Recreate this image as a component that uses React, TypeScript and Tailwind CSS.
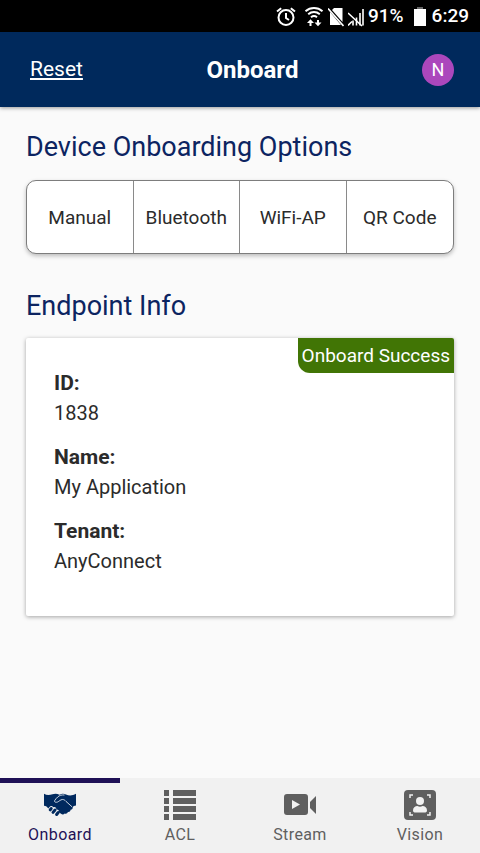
import type { ReactNode } from "react";

const onboardingOptions = ["Manual", "Bluetooth", "WiFi-AP", "QR Code"];

const endpointInfo = [
  { label: "ID:", value: "1838" },
  { label: "Name:", value: "My Application" },
  { label: "Tenant:", value: "AnyConnect" },
];

function StatusBar() {
  return (
    <div className="flex h-8 shrink-0 items-center justify-end bg-black pt-px pr-[11px] text-[19px] font-medium text-white">
      <svg className="mr-2 h-5 w-5" viewBox="0 0 20 20" fill="none" stroke="currentColor" strokeWidth="2" aria-hidden="true">
        <circle cx="10" cy="10.500" r="7.500" />
        <path d="M10 6v5l3 2M1 4.500 5.200 1.200M19 4.500l-4.200-3.300" />
      </svg>
      <svg className="mr-1 h-5 w-5" viewBox="0 0 20 20" fill="none" stroke="currentColor" strokeWidth="2" aria-hidden="true">
        <path d="M1.500 4.200c5-4.200 12-4.200 17 0M4.200 7.200c3.500-2.800 8.100-2.800 11.600 0M7 10.200c1.800-1.400 4.200-1.400 6 0" />
        <path d="M6.500 19v-4M14 13v4" />
        <path d="M3 16 6.500 12.300 10 16zM10.500 15.500l3.500 3.700 3.500-3.700z" fill="currentColor" stroke="none" />
      </svg>
      <svg className="h-5 w-4" viewBox="0 0 16 20" aria-hidden="true">
        <path d="M6 1h8.500v14L4 3z" fill="currentColor" />
        <path d="M2 5v13h11z" fill="currentColor" />
        <path d="M0 1.500 15.500 19" stroke="currentColor" strokeWidth="1.600" />
      </svg>
      <svg className="mx-1 h-5 w-4" viewBox="0 0 16 20" fill="none" stroke="currentColor" aria-hidden="true">
        <path d="M5 18.500v-5M8.500 18.500v-8M12 18.500V6M15 18.500V2" strokeWidth="1.600" />
        <path d="M0 6l14 13M0 18.500l4-4" strokeWidth="1.600" />
      </svg>
      <span>91%</span>
      <svg className="mr-[6px] ml-[10px] h-5 w-3" viewBox="0 0 12 20" aria-hidden="true">
        <path d="M3 0h6v2H3z" fill="#666" />
        <path d="M0 2h12v17H0z" fill="currentColor" />
      </svg>
      <span>6:29</span>
    </div>
  );
}

function HandshakeIcon() {
  return (
    <svg className="h-8 w-8" viewBox="0 0 32 32" aria-hidden="true">
      <path
        d="M0 4.800c2.500 1.500 5 1.700 8.500.5 2.200-.8 4.500-.8 7 .4 2.300-1.300 4.500-1.200 6.500-.2 3.500 1.700 6.500 1.200 10-.7V16.500c-1.700.1-2.700.6-3.300 1.600.3 1.600-.6 2.700-2.100 2.700-.2 1.600-1.200 2.400-2.700 2.200-.6 1.500-1.800 2-3.200 1.400-.9 1.200-2.400 1.300-3.700.3l-2-1.500c.2-1.900-.8-3-2.600-2.800-.2-1.900-1.500-2.700-3.200-2.100-.9-1.500-2.600-1.600-3.700-.2L4.300 19.500C3.300 17.800 2 16.900 0 16.700z"
        fill="#00295e"
      />
      <path
        d="M20.500 6c-2.600-.3-5.100.3-6.800 2-1.300 1.200-2.300 2.300-3.100 3.700-.5 1.500 1.300 1.900 3 1.300 1.700-.8 2.800-2.300 4.700-2.500 1.500-.1 2.700.7 3.700 1.900l6 5.400"
        fill="none"
        stroke="#dfe4ec"
        strokeWidth="0.900"
      />
      <path d="M6.200 20.800l1-1.300M9 23.400l2-2.400M12.600 25.500l1.600-2" stroke="#00295e" strokeWidth="3" strokeLinecap="round" />
    </svg>
  );
}

function ListIcon() {
  return (
    <svg className="h-8 w-8" viewBox="0 0 32 32" fill="currentColor" aria-hidden="true">
      <path d="M0 1h5v6H0zM9 1h23v6H9zM0 9h5v6H0zM9 9h23v6H9zM0 17h5v6H0zM9 17h23v6H9zM0 25h5v6H0zM9 25h23v6H9z" />
    </svg>
  );
}

function VideoIcon() {
  return (
    <svg className="h-8 w-8" viewBox="0 0 32 32" fill="currentColor" aria-hidden="true">
      <path
        fillRule="evenodd"
        d="M3 5h18a3 3 0 0 1 3 3v15a3 3 0 0 1-3 3H3a3 3 0 0 1-3-3V8a3 3 0 0 1 3-3zm5 6v9l8-4.500z"
      />
      <path d="M32 7v18l-6-6v-6z" />
    </svg>
  );
}

function VisionIcon() {
  return (
    <svg className="h-8 w-8" viewBox="0 0 32 32" aria-hidden="true">
      <rect y="1" width="32" height="30" rx="4" fill="currentColor" />
      <path d="M6 9V6h3M23 6h3v3M26 23v3h-3M9 26H6v-3" fill="none" stroke="#f1f1f1" strokeWidth="1.500" />
      <circle cx="16" cy="12" r="4" fill="#f1f1f1" />
      <path d="M9 21.500c0-3 2-4.500 4.500-4.500 1.500 1 3.500 1 5 0 2.500 0 4.500 1.500 4.500 4.500 0 1.500-1 2-2.500 2h-9c-1.500 0-2.500-.5-2.500-2z" fill="#f1f1f1" />
    </svg>
  );
}

const tabs: { label: string; icon: ReactNode; active?: boolean }[] = [
  { label: "Onboard", icon: <HandshakeIcon />, active: true },
  { label: "ACL", icon: <ListIcon /> },
  { label: "Stream", icon: <VideoIcon /> },
  { label: "Vision", icon: <VisionIcon /> },
];

export default function App() {
  return (
    <div className="flex min-h-screen flex-col bg-[#fafafa] font-[Roboto,sans-serif] text-[#2b2b2b]">
      <StatusBar />
      <header className="flex h-[75px] shrink-0 items-center justify-between bg-[#00295c] px-[26px] text-white shadow-[0_1px_4px_rgba(0,0,0,0.4)]">
        <a href="#reset" className="pt-px pl-1 text-[21px] underline underline-offset-2">
          Reset
        </a>
        <h1 className="pt-px text-2xl font-bold">Onboard</h1>
        <button type="button" aria-label="Account" className="flex h-8 w-8 items-center justify-center rounded-full bg-[#ab47bc] text-lg">
          N
        </button>
      </header>

      <main className="grow px-[26px] pt-6">
        <h2 className="text-[27px] leading-8 text-[#0c2461]">Device Onboarding Options</h2>
        <div className="mt-[17px] grid h-[74px] grid-cols-4 divide-x divide-[#8a8a8a] overflow-hidden rounded-[10px] border border-[#7d7d7d] bg-white shadow-[0_2px_4px_rgba(0,0,0,0.25)]">
          {onboardingOptions.map((option) => (
            <button key={option} type="button" className="pt-[3px] text-[19px]">
              {option}
            </button>
          ))}
        </div>

        <h2 className="mt-9 text-[27px] leading-8 text-[#0c2461]">Endpoint Info</h2>
        <section className="relative mt-4 rounded-xs bg-white px-7 pt-[30px] pb-10 shadow-[0_1px_4px_rgba(0,0,0,0.35)]">
          <span className="absolute top-0 right-0 rounded-tr-xs rounded-bl-xl bg-[#417505] px-1 pt-px text-[19px] leading-[34px] text-white">
            Onboard Success
          </span>
          <dl className="flex flex-col gap-[14px]">
            {endpointInfo.map(({ label, value }) => (
              <div key={label}>
                <dt className="text-[21px] leading-[30px] font-bold">{label}</dt>
                <dd className="text-xl leading-[30px]">{value}</dd>
              </div>
            ))}
          </dl>
        </section>
      </main>

      <nav className="grid h-[75px] shrink-0 grid-cols-4 bg-[#f1f1f1]">
        {tabs.map(({ label, icon, active }) => (
          <button
            key={label}
            type="button"
            className={
              active
                ? "flex flex-col items-center border-t-[5px] border-[#1f1156] pt-[6px] text-[#1f1156]"
                : "flex flex-col items-center border-t-[5px] border-transparent pt-[6px] text-[#5f5f5f]"
            }
          >
            {icon}
            <span className="mt-1 text-base leading-5 tracking-wide">{label}</span>
          </button>
        ))}
      </nav>
    </div>
  );
}
